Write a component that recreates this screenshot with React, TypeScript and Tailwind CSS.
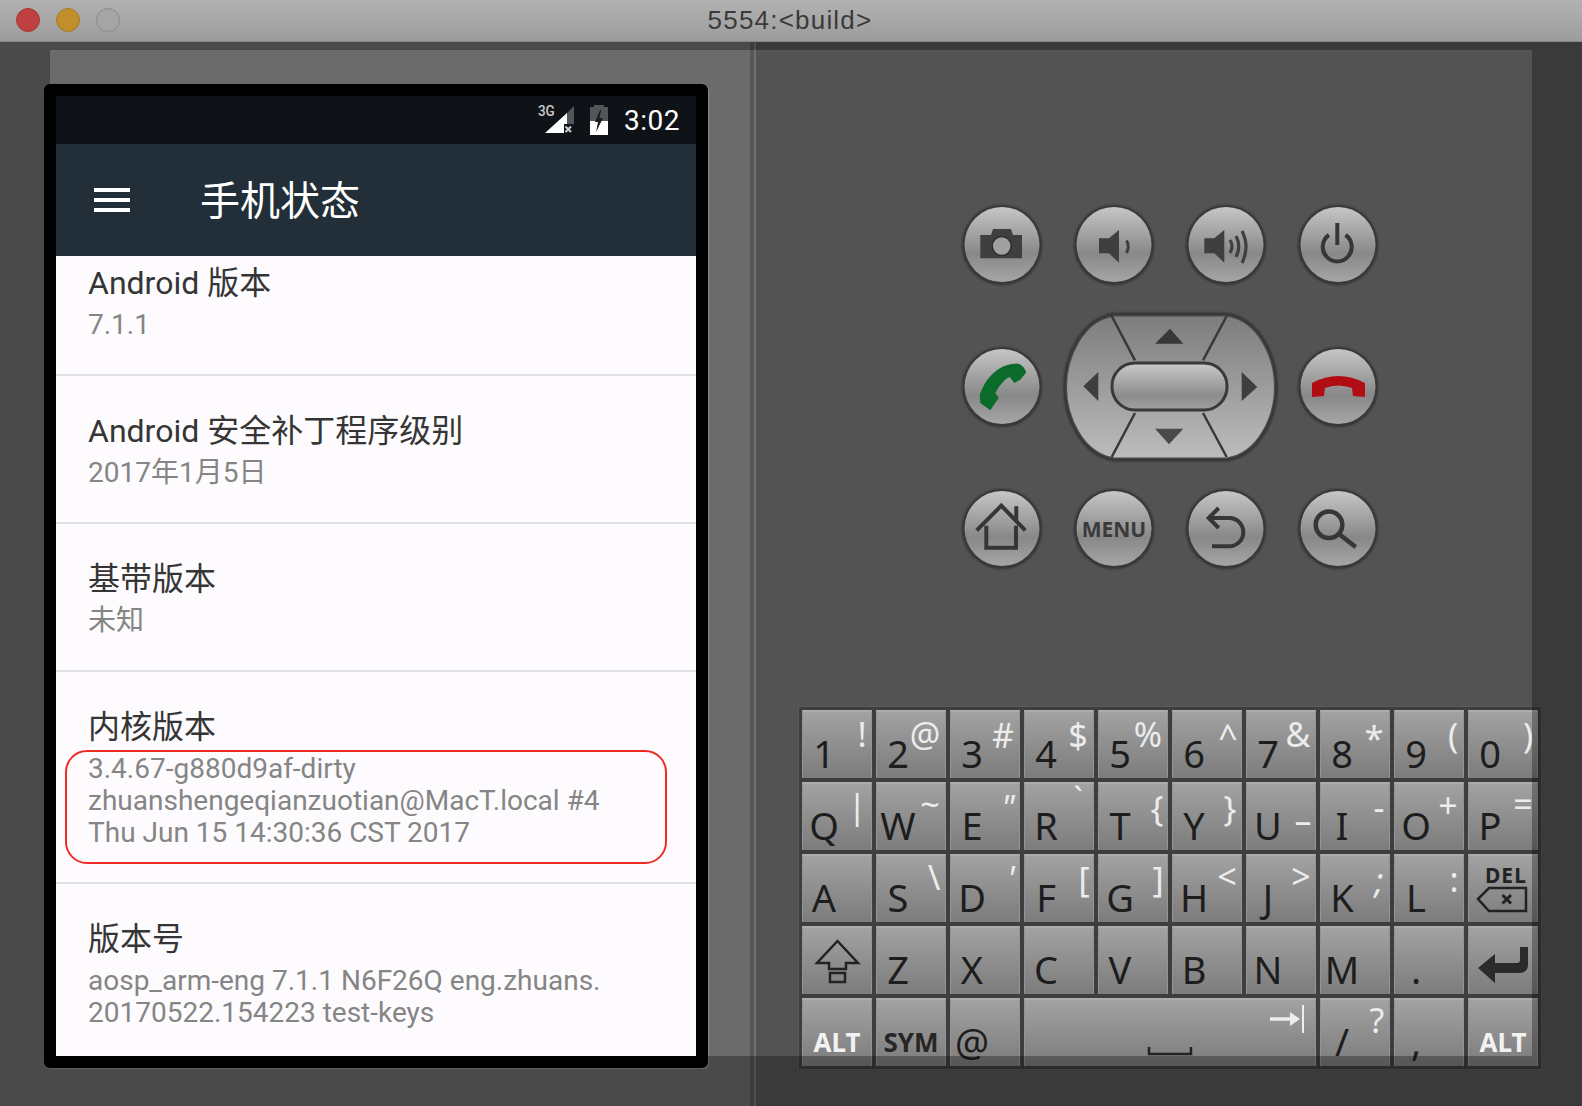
import type { ReactNode } from "react";

const FONT_ANDROID = "font-['Roboto','Noto_Sans_CJK_SC',sans-serif]";

interface KeyDef {
  label?: string;
  sym?: string;
  pos?: string;
  kind?: "alt" | "sym" | "shift" | "del" | "enter" | "space";
}

const KEY_ROWS: KeyDef[][] = [
  [
    { label: "1", sym: "!", pos: "left-[59px] top-[22px]" },
    { label: "2", sym: "@", pos: "left-[48px] top-[22px]" },
    { label: "3", sym: "#", pos: "left-[52px] top-[23px]" },
    { label: "4", sym: "$", pos: "left-[53px] top-[23px]" },
    { label: "5", sym: "%", pos: "left-[49px] top-[22px]" },
    { label: "6", sym: "^", pos: "left-[55px] top-[24px]" },
    { label: "7", sym: "&", pos: "left-[51px] top-[22px]" },
    { label: "8", sym: "*", pos: "left-[53px] top-[26px]" },
    { label: "9", sym: "(", pos: "left-[58px] top-[23px]" },
    { label: "0", sym: ")", pos: "left-[59px] top-[23px]" },
  ],
  [
    { label: "Q", sym: "|", pos: "left-[54px] top-[22px]" },
    { label: "W", sym: "~", pos: "left-[53px] top-[20px]" },
    { label: "E", sym: '"', pos: "left-[57px] top-[23px] italic" },
    { label: "R", sym: "`", pos: "left-[53px] top-[15px]" },
    { label: "T", sym: "{", pos: "left-[58px] top-[24px]" },
    { label: "Y", sym: "}", pos: "left-[57px] top-[24px]" },
    { label: "U", sym: "–", pos: "left-[56px] top-[36px]" },
    { label: "I", sym: "-", pos: "left-[58px] top-[23px]" },
    { label: "O", sym: "+", pos: "left-[53px] top-[21px]" },
    { label: "P", sym: "=", pos: "left-[54px] top-[20px]" },
  ],
  [
    { label: "A" },
    { label: "S", sym: "\\", pos: "left-[57px] top-[21px]" },
    { label: "D", sym: "'", pos: "left-[60px] top-[22px] italic" },
    { label: "F", sym: "[", pos: "left-[59px] top-[23px]" },
    { label: "G", sym: "]", pos: "left-[59px] top-[23px]" },
    { label: "H", sym: "<", pos: "left-[54px] top-[20px]" },
    { label: "J", sym: ">", pos: "left-[54px] top-[20px]" },
    { label: "K", sym: ";", pos: "left-[58px] top-[24px] italic" },
    { label: "L", sym: ":", pos: "left-[59px] top-[23px]" },
    { kind: "del" },
  ],
  [
    { kind: "shift" },
    { label: "Z" },
    { label: "X" },
    { label: "C" },
    { label: "V" },
    { label: "B" },
    { label: "N" },
    { label: "M" },
    { label: "." },
    { kind: "enter" },
  ],
  [
    { kind: "alt" },
    { kind: "sym" },
    { label: "@" },
    { kind: "space" },
    { label: "/", sym: "?", pos: "left-[56px] top-[20px]" },
    { label: "," },
    { kind: "alt" },
  ],
];

const Key = ({ def }: { def: KeyDef }) => {
  const base =
    "relative h-[68px] flex items-end border-t-2 border-t-[#adadad] border-x border-x-[#949494] bg-linear-to-b from-[#a2a2a2] to-[#7c7c7c] font-['Noto_Sans',sans-serif] text-[#1d1d1d]";

  if (def.kind === "alt" || def.kind === "sym") {
    return (
      <div className={`${base} justify-center pb-[6px]`}>
        <span className={`text-[26px] leading-[36px] font-bold ${def.kind === "alt" ? "text-[#f2f2f2]" : "text-[#262626]"}`}>
          {def.kind === "alt" ? "ALT" : "SYM"}
        </span>
      </div>
    );
  }
  if (def.kind === "shift") {
    return (
      <div className={base}>
        <svg className="absolute -left-px -top-[2px]" width="70" height="68" fill="none" stroke="#222" strokeWidth="2.5">
          <path d="M35.5 15 56 37H44V43H27V37H15Z" />
          <rect x="28" y="47" width="15" height="9" />
        </svg>
      </div>
    );
  }
  if (def.kind === "del") {
    return (
      <div className={base}>
        <span className="absolute left-[16px] top-[5px] text-[21px] leading-[28px] font-bold tracking-[1px] text-[#222]">DEL</span>
        <svg className="absolute -left-px -top-[2px]" width="70" height="68" fill="none" stroke="#222" strokeWidth="2.5">
          <path d="M10 45 21 34H58V57H21Z" />
          <path d="M34.5 41 43 49.5M43 41 34.5 49.5" strokeWidth="3" />
        </svg>
      </div>
    );
  }
  if (def.kind === "enter") {
    return (
      <div className={base}>
        <svg className="absolute -left-px -top-[2px]" width="70" height="68" fill="#2b2b2b">
          <path d="M52 21H60V38Q60 47 51 47H27V57L10 42 27 28V37H49Q52 37 52 34Z" />
        </svg>
      </div>
    );
  }
  if (def.kind === "space") {
    return (
      <div className={`${base} col-span-4`}>
        <svg className="absolute -left-px -top-[2px]" width="292" height="68" fill="none">
          <path d="M125 49V56H167V49" stroke="#222" strokeWidth="2.5" />
          <path d="M246 21H268" stroke="#eee" strokeWidth="3.5" />
          <path d="M266 14 276 21 266 28Z" fill="#eee" />
          <path d="M279 7V35" stroke="#eee" strokeWidth="2" />
        </svg>
      </div>
    );
  }
  return (
    <div className={base}>
      <span className="w-[42px] text-center text-[38px] leading-[49px]">{def.label}</span>
      {def.sym && (
        <span className={`absolute -translate-x-1/2 -translate-y-1/2 text-[34px] leading-[36px] text-[#ececec] ${def.pos}`}>
          {def.sym}
        </span>
      )}
    </div>
  );
};

const RoundButton = ({ id, children }: { id: string; children: ReactNode }) => (
  <svg width="84" height="84" viewBox="0 0 84 84">
    <defs>
      <linearGradient id={id} x1="0" y1="0" x2="0" y2="1">
        <stop offset="0" stopColor="#c6c6c6" />
        <stop offset="0.62" stopColor="#888888" />
        <stop offset="1" stopColor="#a6a6a6" />
      </linearGradient>
    </defs>
    <circle cx="42" cy="42" r="41.5" fill="#4a4a4a" />
    <circle cx="42" cy="42" r="40" fill="#393939" />
    <circle cx="42" cy="41.5" r="37.5" fill={`url(#${id})`} />
    {children}
  </svg>
);

const DPad = () => (
  <svg className="overflow-visible" width="213" height="150" viewBox="0 0 213 150">
    <defs>
      <linearGradient id="dpadBody" x1="0" y1="0" x2="0" y2="1">
        <stop offset="0" stopColor="#7c7c7c" />
        <stop offset="1" stopColor="#bdbdbd" />
      </linearGradient>
      <linearGradient id="dpadPill" x1="0" y1="0" x2="0" y2="1">
        <stop offset="0" stopColor="#cacaca" />
        <stop offset="0.7" stopColor="#8c8c8c" />
        <stop offset="1" stopColor="#a2a2a2" />
      </linearGradient>
    </defs>
    <path
      d="M50 2H163C196 7 212.5 45 212.5 75 212.5 105 196 143 163 148H50C17 143 0.5 105 0.5 75 0.5 45 17 7 50 2Z"
      fill="url(#dpadBody)"
      stroke="#4a4a4a"
      strokeWidth="5"
    />
    <path
      d="M50 2H163C196 7 212.5 45 212.5 75 212.5 105 196 143 163 148H50C17 143 0.5 105 0.5 75 0.5 45 17 7 50 2Z"
      fill="none"
      stroke="#393939"
      strokeWidth="2.5"
    />
    <path d="M47.7 4 71 48.3M162.7 4 139 48.3M47.7 145 71 101M162.7 145 139 101" stroke="#393939" strokeWidth="2.5" />
    <rect x="48" y="51" width="115" height="47" rx="23" fill="url(#dpadPill)" stroke="#393939" strokeWidth="3" />
    <path d="M91 31.7 106 16.7 119.3 31.7Z" fill="#383838" />
    <path d="M91 116.7H119.3L105 132.3Z" fill="#4a4a4a" />
    <path d="M34.3 60V89L19.3 74.3Z" fill="#3e3e3e" />
    <path d="M177.7 60V89L193.3 75Z" fill="#3e3e3e" />
  </svg>
);

const SettingRow = ({ title, lines, className = "pt-[31px] pb-[33px]" }: { title: string; lines: string[]; className?: string }) => (
  <div className={`pl-[32px] border-b-2 border-b-[#e1e0e2] ${className}`}>
    <div className="text-[32px] leading-[48px] mb-[2px] text-[#353535]">{title}</div>
    {lines.map(line => (
      <div key={line} className="text-[28px] leading-[32px] text-[#858585] whitespace-nowrap">{line}</div>
    ))}
  </div>
);

const Phone = () => (
  <div className="w-[664px] h-[984px] border-[12px] border-black rounded-[6px] bg-black shadow-[1px_1px_0_#8a8a8a]">
    <div className={`relative w-[640px] h-[960px] overflow-hidden bg-[#fdfbfe] ${FONT_ANDROID}`}>
      {/* status bar */}
      <div className="h-[48px] bg-[#0f1317] flex items-center justify-end pr-[16px]">
        <div className="relative w-[36px] h-[30px] mr-[16px]">
          <span className="absolute -left-[1px] -top-[3px] text-[15px] leading-[18px] font-medium text-[#c8c8c8] scale-x-90">3G</span>
          <svg className="absolute left-0 top-0" width="36" height="30">
            <path d="M29 8 36 1V19H29Z" fill="#50565a" />
            <path d="M7 28 29 8V19H26V28Z" fill="#fff" />
            <path d="M27.5 21.5 33 27M33 21.5 27.5 27" stroke="#cfcfcf" strokeWidth="2" />
          </svg>
        </div>
        <svg className="mr-[16px]" width="18" height="30">
          <path d="M4 0H14V2H18V30H0V2H4Z" fill="#50565a" />
          <path d="M0 16H18V30H0Z" fill="#fff" />
          <path d="M10 5 5 17H8L6 27 13 13H9.5L11 5Z" fill="#1a1d20" />
        </svg>
        <span className="text-[28px] leading-[32px] tracking-[0.5px] text-white translate-y-[1px]">3:02</span>
      </div>

      {/* toolbar */}
      <div className="h-[112px] bg-[#222f38] flex items-center">
        <div className="ml-[38px] w-[36px] flex flex-col gap-[6px]">
          <div className="h-[4px] bg-white" />
          <div className="h-[4px] bg-white" />
          <div className="h-[4px] bg-white" />
        </div>
        <span className="ml-[70px] mt-[3px] text-[40px] leading-[48px] text-white">手机状态</span>
      </div>

      {/* list */}
      <SettingRow title="Android 版本" lines={["7.1.1"]} className="pt-[3px] pb-[33px]" />
      <SettingRow title="Android 安全补丁程序级别" lines={["2017年1月5日"]} />
      <SettingRow title="基带版本" lines={["未知"]} />
      <SettingRow
        title="内核版本"
        lines={["3.4.67-g880d9af-dirty", "zhuanshengeqianzuotian@MacT.local #4", "Thu Jun 15 14:30:36 CST 2017"]}
      />
      <SettingRow title="版本号" lines={["aosp_arm-eng 7.1.1 N6F26Q eng.zhuans.", "20170522.154223 test-keys"]} />

      {/* annotation */}
      <div className="absolute left-[9px] top-[654px] w-[602px] h-[114px] border-2 border-[#ee2a24] rounded-[22px]" />
    </div>
  </div>
);

const Controls = () => (
  <div className="grid grid-cols-[repeat(4,112px)] grid-rows-[repeat(3,142px)] place-items-center w-[448px] ml-[190px] pt-[132px] box-content">
    <RoundButton id="b1">
      <path d="M20.3 32H31L33 26H51L53 32H62V55.3H20.3Z" fill="#3f3f3f" />
      <circle cx="41.7" cy="43" r="9.5" fill="#a0a0a0" stroke="#2f2f2f" strokeWidth="1.5" />
    </RoundButton>
    <RoundButton id="b2">
      <path d="M27 35.3H37L47 27V59.7L37 50.3H27Z" fill="#3f3f3f" />
      <path d="M54.5 37.5Q58 43.5 54.5 50" fill="none" stroke="#3f3f3f" strokeWidth="3" />
    </RoundButton>
    <RoundButton id="b3">
      <path d="M20.3 35.3H30.3L40.3 27V59.7L30.3 50.3H20.3Z" fill="#3f3f3f" />
      <path d="M46 37Q50 43.5 46 50M52 33Q57.5 43.5 52 54M58 28Q66 43.5 58 60" fill="none" stroke="#3f3f3f" strokeWidth="3.2" />
    </RoundButton>
    <RoundButton id="b4">
      <path d="M33 32A14.5 14.5 0 1 0 49.5 32M41.3 20V42" fill="none" stroke="#363636" strokeWidth="4" />
    </RoundButton>

    <RoundButton id="b5">
      <path
        d="M58.7 18.7Q64 21 66.3 27.3L60.3 34.7 54.3 38 49.7 32Q45 34 43.7 36.3 38 42 35.3 48L38.7 53 30.3 65.3 20.3 58 19.7 49.7Q24 38 30.3 31.3 37 24 43.7 21.3 52 18 58.7 18.7Z"
        fill="#0b6b2b"
      />
    </RoundButton>
    <div className="col-span-2">
      <DPad />
    </div>
    <RoundButton id="b6">
      <path d="M16 52V38Q42 24 69 38V52L57 51 56 43Q42 38 29 43L28 51Z" fill="#b30d14" />
    </RoundButton>

    <RoundButton id="b7">
      <path d="M16.7 43.3 41.3 18.7 65.3 43.3M56.3 19.3V34" fill="none" stroke="#363636" strokeWidth="4" />
      <path d="M26.3 38.7V60.7H56V38.7" fill="none" stroke="#363636" strokeWidth="4" />
    </RoundButton>
    <RoundButton id="b8">
      <text x="42" y="50" textAnchor="middle" fontFamily="Noto Sans" fontWeight="700" fontSize="21" fill="#3a3a3a">MENU</text>
    </RoundButton>
    <RoundButton id="b9">
      <path d="M28 59.3H46.3A14.2 14.2 0 0 0 46.3 31H24.7M34.7 21 24.7 31 34.7 41" fill="none" stroke="#363636" strokeWidth="4" />
    </RoundButton>
    <RoundButton id="b10">
      <circle cx="33" cy="37.7" r="13.3" fill="none" stroke="#363636" strokeWidth="4.5" />
      <path d="M43 47 59.7 60" stroke="#363636" strokeWidth="4.5" />
    </RoundButton>
  </div>
);

const Keyboard = () => (
  <div className="mt-[106px] ml-[42px] w-[744px] h-[364px] p-[3px] border border-[#5a5a5a] bg-[#3e3e3e]">
    <div className="grid grid-cols-[repeat(10,70px)] gap-[4px]">
      {KEY_ROWS.flat().map((def, i) => (
        <Key key={i} def={def} />
      ))}
    </div>
  </div>
);

export default function App() {
  return (
    <div className="relative w-[1582px] h-[1106px] overflow-hidden bg-[#535353]">
      {/* window title bar */}
      <div className="relative h-[42px] flex items-center justify-center border-b border-b-[#858585] bg-linear-to-b from-[#b2b2b2] to-[#9c9c9c]">
        <div className="absolute left-[16px] top-[8px] flex gap-[16px]">
          <div className="w-[24px] h-[24px] rounded-full bg-[#bf4040] border border-[#a63a3a]" />
          <div className="w-[24px] h-[24px] rounded-full bg-[#c08f2c] border border-[#a87c25]" />
          <div className="w-[24px] h-[24px] rounded-full bg-[#a5a5a5] border border-[#8c8c8c]" />
        </div>
        <span className="font-['Liberation_Sans',sans-serif] text-[26px] tracking-[1.2px] text-[#3a3a3a] -translate-x-[1px]">5554:&lt;build&gt;</span>
      </div>

      {/* emulator body */}
      <div className="flex h-[1064px]">
        <div className="w-[750px] bg-[#6b6b6b] pl-[44px] pt-[42px]">
          <Phone />
        </div>
        <div className="w-[4px] bg-[#565656]" />
        <div className="w-[2px] bg-[#707070]" />
        <div className="flex-1 flex flex-col">
          <Controls />
          <Keyboard />
        </div>
      </div>

      {/* dimmed area around the skin */}
      <div className="absolute left-0 right-0 top-[42px] h-[8px] bg-black/30" />
      <div className="absolute left-0 top-[50px] w-[50px] h-[1006px] bg-black/30" />
      <div className="absolute left-[1532px] right-0 top-[50px] h-[1006px] bg-black/30" />
      <div className="absolute left-0 right-0 top-[1056px] bottom-0 bg-black/30" />
    </div>
  );
}
